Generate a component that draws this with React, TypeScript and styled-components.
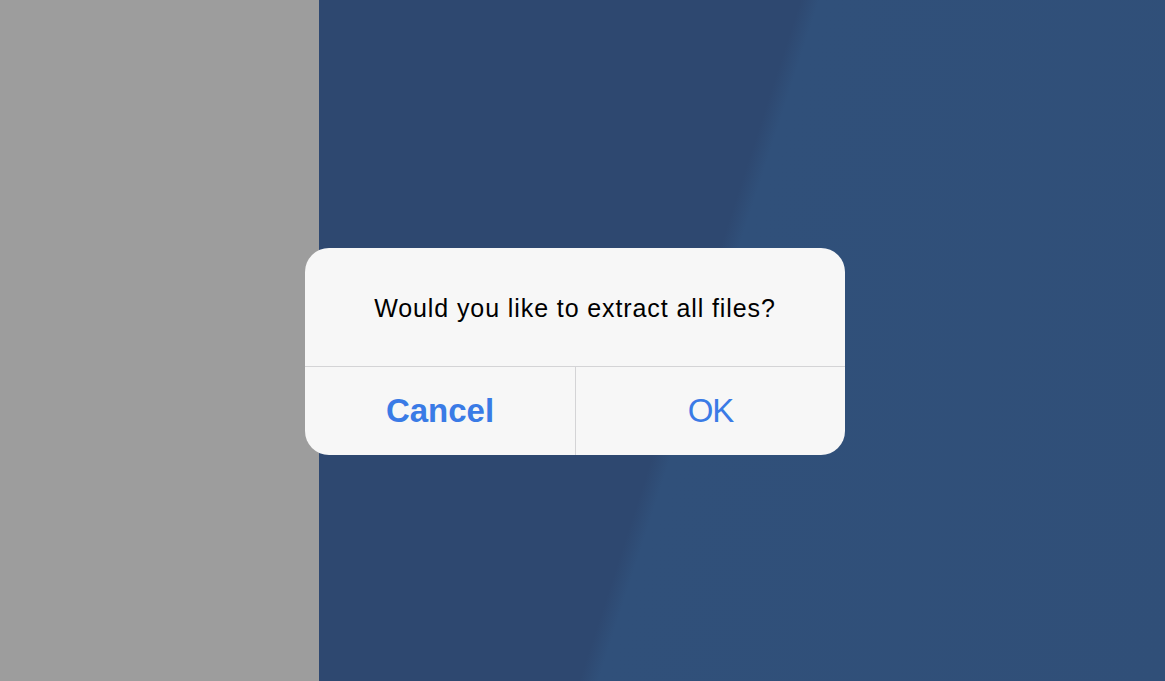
import styled, { createGlobalStyle } from "styled-components";

const GlobalStyle = createGlobalStyle`
  html, body {
    margin: 0;
    padding: 0;
    height: 100%;
  }
  body {
    font-family: "Liberation Sans", Arial, sans-serif;
    overflow: hidden;
  }
  #root {
    height: 100%;
  }
`;

export default function App() {
  return (
    <>
      <GlobalStyle />
      <Screen>
        <SidePanel />
        <MainPanel />
        <Alert role="alertdialog">
          <Message>Would you like to extract all files?</Message>
          <Actions>
            <ActionButton $bold>Cancel</ActionButton>
            <ActionButton>OK</ActionButton>
          </Actions>
        </Alert>
      </Screen>
    </>
  );
}

const Screen = styled.div`
  position: relative;
  display: flex;
  width: 100%;
  height: 100%;
`;

const SidePanel = styled.div`
  width: 319px;
  flex-shrink: 0;
  background: #9d9d9d;
`;

const MainPanel = styled.div`
  flex: 1;
  background: linear-gradient(
    108deg,
    #2e4870 0px,
    #2e4870 458px,
    #30507a 476px,
    #304f78 100%
  );
`;

const Alert = styled.div`
  position: absolute;
  left: 305px;
  top: 248px;
  width: 540px;
  height: 207px;
  border-radius: 24px;
  background: #f7f7f7;
  display: flex;
  flex-direction: column;
  overflow: hidden;
`;

const Message = styled.div`
  height: 119px;
  box-sizing: border-box;
  display: flex;
  align-items: center;
  justify-content: center;
  font-size: 25px;
  letter-spacing: 0.9px;
  color: #000;
  padding-top: 3px;
  border-bottom: 1px solid #d4d4d6;
`;

const Actions = styled.div`
  flex: 1;
  display: grid;
  grid-template-columns: 270px 1fr;
`;

const ActionButton = styled.button<{ $bold?: boolean }>`
  border: none;
  background: transparent;
  font-family: "Liberation Sans", Arial, sans-serif;
  font-size: 33px;
  letter-spacing: ${(p) => (p.$bold ? "0px" : "-1px")};
  font-weight: ${(p) => (p.$bold ? 700 : 400)};
  color: #3a7be6;
  padding: 0;
  & + & {
    border-left: 1px solid #d4d4d6;
  }
`;
